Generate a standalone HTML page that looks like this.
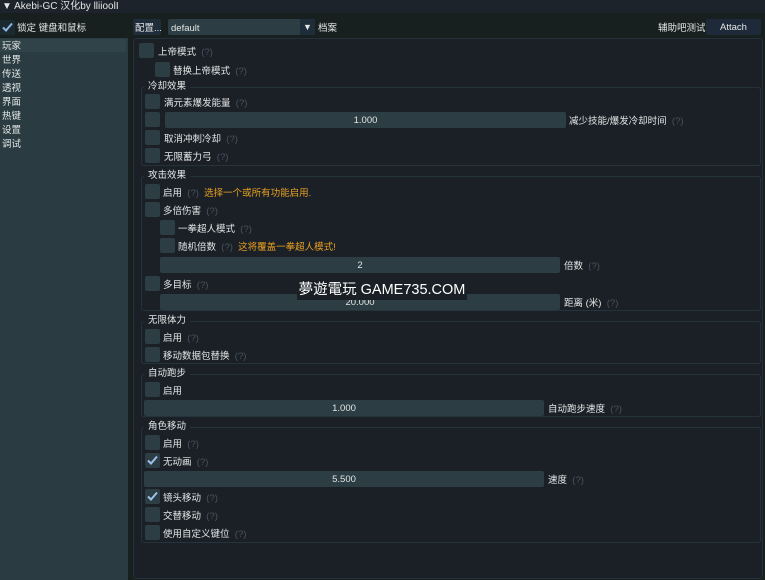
<!DOCTYPE html>
<html><head><meta charset="utf-8"><style>
*{margin:0;padding:0;box-sizing:border-box}
body{width:765px;height:580px;background:#171f1f;position:relative;overflow:hidden;font-family:"Liberation Sans","Noto Sans CJK SC",sans-serif;font-size:9.5px;color:#e4e6e6}
div,span{position:absolute}
.t{white-space:nowrap;line-height:15px;padding-top:1px}
.cb{width:15px;height:15px;background:#2c3d43;border-radius:2px}
.q{color:#47535a}
.o{color:#e8a020}
.sl{height:16px;background:#2c3d43;border-radius:2px;text-align:center;line-height:17px}
.g{border:1px solid #25343a;border-radius:3px;left:141px;width:620px}
.gt{background:#1b2027;padding:0 4px;left:144px;line-height:12px}
.ck svg{position:absolute;left:2px;top:2px}
</style></head><body>
<div style="left:0;top:0;width:765px;height:13px;background:#1c232b"></div>
<div class="t" style="left:2px;top:-2px;font-size:10px">▼ Akebi-GC 汉化by lliioolI</div>
<div class="cb ck" style="left:0;top:20px;background:#1b2a30"><svg width="11" height="11" viewBox="0 0 11 11"><path d="M1 5.5 L4 8.5 L10 1.5" stroke="#8fb4e0" stroke-width="2" fill="none"/></svg></div>
<div class="t" style="left:17px;top:20px">锁定 键盘和鼠标</div>
<div style="left:133px;top:19px;width:28px;height:16px;background:#1f2c3a;border-radius:2px"></div>
<div class="t" style="left:135px;top:20px">配置...</div>
<div style="left:168px;top:19px;width:147px;height:16px;background:#2c3d43;border-radius:2px"></div>
<div style="left:300px;top:19px;width:15px;height:16px;background:#1f2c3a"></div>
<div class="t" style="left:303px;top:19px;font-size:9px">▼</div>
<div class="t" style="left:171px;top:20px">default</div>
<div class="t" style="left:318px;top:20px">档案</div>
<div class="t" style="left:658px;top:20px">辅助吧测试</div>
<div style="left:706px;top:19px;width:55px;height:16px;background:#1e2a3a;border-radius:2px;text-align:center;line-height:17px">Attach</div>
<div style="left:0;top:38px;width:128px;height:542px;background:#2a3c42"></div>
<div style="left:0;top:39px;width:126px;height:13px;background:#304348"></div>
<div class="t" style="left:2px;top:39px;line-height:14px">玩家<br>世界<br>传送<br>透视<br>界面<br>热键<br>设置<br>调试</div>
<div style="left:133px;top:38px;width:630px;height:541px;background:#1b2027;border:1px solid #24303a;border-radius:3px"></div>

<div class="cb" style="left:139px;top:43px"></div><div class="t" style="left:158px;top:44px">上帝模式 <span class="q" style="position:static">&nbsp;(?)</span></div>
<div class="cb" style="left:155px;top:62px"></div><div class="t" style="left:173px;top:63px">替换上帝模式 <span class="q" style="position:static">&nbsp;(?)</span></div>

<div class="g" style="top:87px;height:79px"></div><div class="t gt" style="top:81px">冷却效果</div>
<div class="cb" style="left:145px;top:94px"></div><div class="t" style="left:164px;top:95px">满元素爆发能量 <span class="q" style="position:static">&nbsp;(?)</span></div>
<div class="cb" style="left:145px;top:112px"></div><div class="sl" style="left:165px;top:112px;width:401px">1.000</div><div class="t" style="left:569px;top:113px">减少技能/爆发冷却时间 <span class="q" style="position:static">&nbsp;(?)</span></div>
<div class="cb" style="left:145px;top:130px"></div><div class="t" style="left:164px;top:131px">取消冲刺冷却 <span class="q" style="position:static">&nbsp;(?)</span></div>
<div class="cb" style="left:145px;top:148px"></div><div class="t" style="left:164px;top:149px">无限蓄力弓 <span class="q" style="position:static">&nbsp;(?)</span></div>

<div class="g" style="top:176px;height:135px"></div><div class="t gt" style="top:170px">攻击效果</div>
<div class="cb" style="left:145px;top:184px"></div><div class="t" style="left:163px;top:185px">启用 <span class="q" style="position:static">&nbsp;(?)&nbsp;</span> <span class="o" style="position:static">选择一个或所有功能启用.</span></div>
<div class="cb" style="left:145px;top:202px"></div><div class="t" style="left:163px;top:203px">多倍伤害 <span class="q" style="position:static">&nbsp;(?)</span></div>
<div class="cb" style="left:160px;top:220px"></div><div class="t" style="left:178px;top:221px">一拳超人模式 <span class="q" style="position:static">&nbsp;(?)</span></div>
<div class="cb" style="left:160px;top:238px"></div><div class="t" style="left:178px;top:239px">随机倍数 <span class="q" style="position:static">&nbsp;(?)&nbsp;</span> <span class="o" style="position:static">这将覆盖一拳超人模式!</span></div>
<div class="sl" style="left:160px;top:257px;width:400px">2</div><div class="t" style="left:564px;top:258px">倍数 <span class="q" style="position:static">&nbsp;(?)</span></div>
<div class="cb" style="left:145px;top:276px"></div><div class="t" style="left:163px;top:277px">多目标 <span class="q" style="position:static">&nbsp;(?)</span></div>
<div class="sl" style="left:160px;top:294px;width:400px">20.000</div><div class="t" style="left:564px;top:295px">距离 (米) <span class="q" style="position:static">&nbsp;(?)</span></div>

<div class="g" style="top:321px;height:43px"></div><div class="t gt" style="top:315px">无限体力</div>
<div class="cb" style="left:145px;top:329px"></div><div class="t" style="left:163px;top:330px">启用 <span class="q" style="position:static">&nbsp;(?)</span></div>
<div class="cb" style="left:145px;top:347px"></div><div class="t" style="left:163px;top:348px">移动数据包替换 <span class="q" style="position:static">&nbsp;(?)</span></div>

<div class="g" style="top:374px;height:43px"></div><div class="t gt" style="top:368px">自动跑步</div>
<div class="cb" style="left:145px;top:382px"></div><div class="t" style="left:163px;top:383px">启用</div>
<div class="sl" style="left:144px;top:400px;width:400px">1.000</div><div class="t" style="left:548px;top:401px">自动跑步速度 <span class="q" style="position:static">&nbsp;(?)</span></div>

<div class="g" style="top:427px;height:116px"></div><div class="t gt" style="top:421px">角色移动</div>
<div class="cb" style="left:145px;top:435px"></div><div class="t" style="left:163px;top:436px">启用 <span class="q" style="position:static">&nbsp;(?)</span></div>
<div class="cb ck" style="left:145px;top:453px"><svg width="11" height="11" viewBox="0 0 11 11"><path d="M1 5.5 L4 8.5 L10 1.5" stroke="#9fc0ea" stroke-width="2" fill="none"/></svg></div><div class="t" style="left:163px;top:454px">无动画 <span class="q" style="position:static">&nbsp;(?)</span></div>
<div class="sl" style="left:144px;top:471px;width:400px">5.500</div><div class="t" style="left:548px;top:472px">速度 <span class="q" style="position:static">&nbsp;(?)</span></div>
<div class="cb ck" style="left:145px;top:489px"><svg width="11" height="11" viewBox="0 0 11 11"><path d="M1 5.5 L4 8.5 L10 1.5" stroke="#9fc0ea" stroke-width="2" fill="none"/></svg></div><div class="t" style="left:163px;top:490px">镜头移动 <span class="q" style="position:static">&nbsp;(?)</span></div>
<div class="cb" style="left:145px;top:507px"></div><div class="t" style="left:163px;top:508px">交替移动 <span class="q" style="position:static">&nbsp;(?)</span></div>
<div class="cb" style="left:145px;top:525px"></div><div class="t" style="left:163px;top:526px">使用自定义键位 <span class="q" style="position:static">&nbsp;(?)</span></div>

<div style="left:297px;top:280px;width:170px;height:20px;background:#1a2025;color:#fff;font-size:14.5px;line-height:20px;text-align:center;white-space:nowrap">夢遊電玩 GAME735.COM</div>
</body></html>
